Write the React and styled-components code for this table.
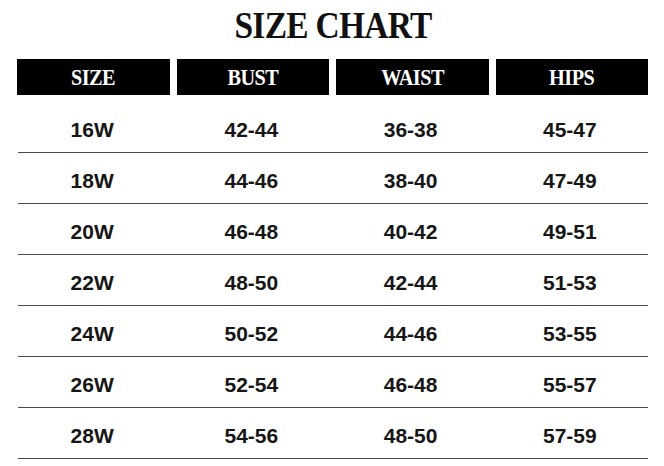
import React from "react";
import styled, { createGlobalStyle } from "styled-components";

const GlobalStyle = createGlobalStyle`
  html, body {
    margin: 0;
    padding: 0;
    background: #ffffff;
  }
`;

const columns = ["SIZE", "BUST", "WAIST", "HIPS"];

const rows = [
  ["16W", "42-44", "36-38", "45-47"],
  ["18W", "44-46", "38-40", "47-49"],
  ["20W", "46-48", "40-42", "49-51"],
  ["22W", "48-50", "42-44", "51-53"],
  ["24W", "50-52", "44-46", "53-55"],
  ["26W", "52-54", "46-48", "55-57"],
  ["28W", "54-56", "48-50", "57-59"],
];

const App = () => {
  return (
    <Page>
      <GlobalStyle />
      <Title>
        <TitleText>SIZE CHART</TitleText>
      </Title>
      <HeaderRow>
        {columns.map((c) => (
          <HeaderCell key={c}>
            <HeaderText>{c}</HeaderText>
          </HeaderCell>
        ))}
      </HeaderRow>
      <Body>
        {rows.map((r) => (
          <Row key={r[0]}>
            {r.map((v, i) => (
              <Cell key={i}>{v}</Cell>
            ))}
          </Row>
        ))}
      </Body>
    </Page>
  );
};

const Page = styled.div`
  width: 664px;
  height: 466px;
  overflow: hidden;
  background: #fff;
  padding: 0 16px 0 17px;
  box-sizing: border-box;
`;

const Title = styled.h1`
  margin: 0;
  height: 51px;
  line-height: 51px;
  text-align: center;
  font-family: "Liberation Serif", "Times New Roman", serif;
  font-weight: 700;
  font-size: 38px;
  color: #111;
  padding-left: 2px;
`;

const TitleText = styled.span`
  display: inline-block;
  letter-spacing: -0.8px;
  transform: scaleX(0.88);
`;

const HeaderRow = styled.div`
  margin-top: 8px;
  display: grid;
  grid-template-columns: repeat(4, 1fr);
  gap: 7px;
`;

const HeaderCell = styled.div`
  height: 36px;
  background: #000;
  color: #fff;
  display: flex;
  align-items: center;
  justify-content: center;
  padding-top: 2px;
  box-sizing: border-box;
  font-family: "Liberation Serif", "Times New Roman", serif;
  font-weight: 700;
  font-size: 23px;
`;

const HeaderText = styled.span`
  display: inline-block;
  letter-spacing: -0.6px;
  transform: scaleX(0.88);
`;

const Body = styled.div`
  margin-top: 7px;
  padding-left: 1px;
`;

const Row = styled.div`
  display: grid;
  grid-template-columns: repeat(4, 1fr);
  gap: 7px;
  height: 51px;
  box-sizing: border-box;
  border-bottom: 1px solid #4a4a4a;
  padding-top: 6px;
`;

const Cell = styled.div`
  display: flex;
  align-items: center;
  justify-content: center;
  padding-right: 4px;
  font-family: "Liberation Sans", Arial, sans-serif;
  font-weight: 700;
  font-size: 21px;
  color: #161616;
`;

export default App;
